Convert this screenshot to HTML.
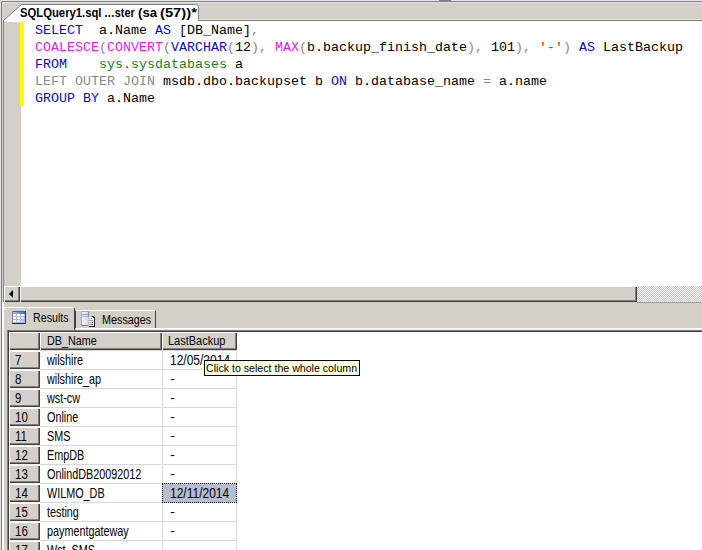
<!DOCTYPE html>
<html><head><meta charset="utf-8">
<style>
*{margin:0;padding:0;box-sizing:border-box}
html,body{width:702px;height:550px;overflow:hidden;background:#d4d0c8;position:relative;font-family:"Liberation Sans",sans-serif}
.a{position:absolute}
.t{white-space:pre;line-height:14px;color:#000;transform-origin:0 0}
.code{position:absolute;left:35px;top:22px;font-family:"Liberation Mono",monospace;font-size:13.33px;line-height:17px;white-space:pre;color:#000}
.k{color:#0c0cc0}.f{color:#e81ce8}.g{color:#8a8a8a}.s{color:#e01010}.n{color:#1a801a}
</style></head><body>
<div class="a" style="left:0px;top:0px;width:702px;height:1px;background:#e6e6e6;"></div>
<div class="a" style="left:0px;top:0px;width:1px;height:550px;background:#e0e0e0;"></div>
<div class="a" style="left:1px;top:1px;width:701px;height:1px;background:#808080;"></div>
<div class="a" style="left:439px;top:0px;width:12px;height:2px;background:#808080;"></div>
<div class="a" style="left:1px;top:1px;width:1px;height:549px;background:#808080;"></div>
<div class="a" style="left:2px;top:2px;width:700px;height:1px;background:#e4e2dc;"></div>
<div class="a" style="left:3px;top:20px;width:699px;height:1px;background:#808080;"></div>
<div class="a" style="left:3px;top:20px;width:1px;height:282px;background:#808080;"></div>
<div class="a" style="left:2px;top:21px;width:1px;height:281px;background:#d8d6d0;"></div>
<div class="a" style="left:4px;top:21px;width:698px;height:265px;background:#fff;"></div>
<div class="a" style="left:4px;top:21px;width:17px;height:265px;background:#d4d0c8;"></div>
<div class="a" style="left:20px;top:21px;width:4px;height:85px;background:#ffff00;"></div>
<div class="a" style="left:199px;top:19px;width:503px;height:1px;background:#e4e2dc;"></div>
<svg class="a" style="left:0;top:0" width="702" height="22">
  <path d="M3.5 21 L3.5 20.5 L21.5 4.5 L195.5 4.5 Q198.5 4.5 198.5 7.5 L198.5 20.5" fill="#fff" stroke="#808080" stroke-width="1"/>
  <rect x="4" y="20" width="194" height="2" fill="#fff"/>
</svg>
<div class="a t" style="left:20px;top:6px;font-size:12px;transform-origin:0 12px;transform:scale(0.94,1.0);font-weight:bold">SQLQuery1.sql</div>
<div class="a t" style="left:103.5px;top:6px;font-size:12px;transform-origin:0 12px;transform:scale(0.9,1.0);font-weight:bold">…ster</div>
<div class="a t" style="left:138px;top:6px;font-size:12px;transform-origin:0 12px;transform:scale(1.1,1.0);font-weight:bold">(sa</div>
<div class="a t" style="left:159.5px;top:6px;font-size:12px;transform-origin:0 12px;transform:scale(1.23,1.0);font-weight:bold">(57))*</div>
<div class="code"><span class="k">SELECT</span>  a.Name <span class="k">AS</span> [DB_Name]<span class="g">,</span>
<span class="f">COALESCE</span><span class="g">(</span><span class="f">CONVERT</span><span class="g">(</span><span class="k">VARCHAR</span><span class="g">(</span>12<span class="g">),</span> <span class="f">MAX</span><span class="g">(</span>b.backup_finish_date<span class="g">),</span> 101<span class="g">),</span> <span class="s">'-'</span><span class="g">)</span> <span class="k">AS</span> LastBackup
<span class="k">FROM</span>    <span class="n">sys.sysdatabases</span> a
<span class="g">LEFT OUTER JOIN</span> msdb.dbo.backupset b <span class="k">ON</span> b.database_name <span class="g">=</span> a.name
<span class="k">GROUP BY</span> a.Name</div>
<div class="a" style="left:4px;top:286px;width:698px;height:15px;background:#d4d0c8;"></div>
<div class="a" style="left:4px;top:301px;width:633px;height:1px;background:#404040;"></div>
<div class="a" style="left:4px;top:286px;width:16px;height:16px;background:#d4d0c8;box-shadow:inset 1px 1px 0 #fff,inset -1px -1px 0 #404040,inset -2px -2px 0 #808080"></div>
<svg class="a" style="left:9px;top:290px" width="5" height="8"><path d="M4 0 L4 8 L0 4 Z" fill="#000"/></svg>
<div class="a" style="left:20px;top:286px;width:617px;height:16px;background:#d4d0c8;box-shadow:inset 1px 1px 0 #fff,inset -1px -1px 0 #404040,inset -2px -2px 0 #808080"></div>
<svg class="a" style="left:637px;top:286px" width="65" height="16" shape-rendering="crispEdges"><defs><pattern id="ck" width="2" height="2" patternUnits="userSpaceOnUse"><rect width="2" height="2" fill="#fff"/><rect width="1" height="1" fill="#c4c2bc"/><rect x="1" y="1" width="1" height="1" fill="#c4c2bc"/></pattern></defs><rect width="65" height="16" fill="url(#ck)"/></svg>
<div class="a" style="left:637px;top:302px;width:65px;height:1px;background:#9a9a9a;"></div>
<div class="a" style="left:2px;top:302px;width:2px;height:248px;background:#fafafa;"></div>
<div class="a" style="left:3px;top:307px;width:72px;height:24px;background:#d4d0c8;border-top:1px solid #fff;border-left:1px solid #fff;border-right:1px solid #404040;border-radius:3px 2px 0 0"></div>
<svg class="a" style="left:12px;top:311px" width="14" height="13" shape-rendering="crispEdges">
  <defs><linearGradient id="hg" x1="0" x2="1"><stop offset="0" stop-color="#a0c0f4"/><stop offset="1" stop-color="#3a62d8"/></linearGradient></defs>
  <rect x="0" y="0" width="14" height="13" fill="#b4bcd8"/>
  <rect x="0" y="0" width="14" height="1" fill="#3c5cc8"/>
  <rect x="0" y="0" width="1" height="13" fill="#7080b8"/>
  <rect x="13" y="0" width="1" height="13" fill="#283070"/>
  <rect x="0" y="12" width="14" height="1" fill="#202838"/>
  <rect x="1" y="1" width="12" height="2" fill="url(#hg)"/>
  <rect x="1" y="3" width="3" height="2" fill="#fff"/><rect x="5" y="3" width="3" height="2" fill="#fff"/><rect x="9" y="3" width="3" height="2" fill="#f4f6ff"/>
  <rect x="1" y="6" width="3" height="2" fill="#fff"/><rect x="5" y="6" width="3" height="2" fill="#f8f8ff"/><rect x="9" y="6" width="3" height="2" fill="#dde2f6"/>
  <rect x="1" y="9" width="3" height="2" fill="#fff"/><rect x="5" y="9" width="3" height="2" fill="#e4e8f8"/><rect x="9" y="9" width="3" height="2" fill="#c4cbec"/>
</svg>
<div class="a t" style="left:32.5px;top:311px;font-size:12px;transform-origin:0 12px;transform:scale(0.89,1.0);">Results</div>
<div class="a" style="left:75px;top:310px;width:81px;height:18px;background:#d4d0c8;border-top:1px solid #fff;border-left:1px solid #404040;border-right:1px solid #404040"></div>
<svg class="a" style="left:81px;top:311px" width="16" height="16" shape-rendering="crispEdges">
  <defs><linearGradient id="dg" x1="0" x2="1"><stop offset="0" stop-color="#f8fbff"/><stop offset="1" stop-color="#c8d8e8"/></linearGradient></defs>
  <rect x="0" y="0" width="8" height="15" fill="url(#dg)"/>
  <rect x="0" y="0" width="1" height="15" fill="#a8a0c4"/>
  <rect x="7" y="0" width="1" height="15" fill="#8090a8"/>
  <rect x="0" y="0" width="8" height="1" fill="#a0a8c0"/>
  <rect x="0" y="14" width="8" height="1" fill="#707890"/>
  <rect x="1" y="3" width="6" height="1" fill="#98a4c0"/>
  <rect x="1" y="5" width="6" height="1" fill="#a8b4c8"/>
  <rect x="7" y="6" width="7" height="10" fill="#fff"/>
  <rect x="13" y="7" width="1" height="9" fill="#202030"/>
  <rect x="7" y="15" width="7" height="1" fill="#202030"/>
  <rect x="7" y="6" width="1" height="10" fill="#c0c0d0"/>
  <rect x="11" y="5" width="2" height="1" fill="#303040"/><rect x="12" y="6" width="2" height="1" fill="#303040"/>
  <rect x="8" y="7" width="3" height="1" fill="#eca898"/><rect x="8" y="9" width="3" height="1" fill="#e49888"/>
  <rect x="8" y="11" width="3" height="1" fill="#eca880"/><rect x="8" y="13" width="3" height="1" fill="#dc9080"/>
  <rect x="11" y="9" width="1" height="1" fill="#606070"/><rect x="11" y="11" width="1" height="1" fill="#404050"/><rect x="11" y="13" width="1" height="1" fill="#303040"/>
</svg>
<div class="a t" style="left:101.5px;top:313px;font-size:12px;transform-origin:0 12px;transform:scale(0.9,1.0);">Messages</div>
<div class="a" style="left:76px;top:328px;width:626px;height:1px;background:#fff;"></div>
<div class="a" style="left:76px;top:329px;width:626px;height:1px;background:#ecebe8;"></div>
<div class="a" style="left:7px;top:330px;width:695px;height:220px;background:#fff;"></div>
<div class="a" style="left:7px;top:330px;width:695px;height:2px;background:linear-gradient(#808080 0 1px,#404040 1px 2px);"></div>
<div class="a" style="left:7px;top:330px;width:2px;height:220px;background:linear-gradient(90deg,#808080 0 1px,#404040 1px 2px);"></div>
<div class="a" style="left:9px;top:332px;width:31px;height:18px;background:#d4d0c8;box-shadow:inset 1px 1px 0 #fff,inset -1px -1px 0 #404040,inset -2px -2px 0 #808080"></div>
<div class="a" style="left:40px;top:332px;width:122px;height:18px;background:#d4d0c8;box-shadow:inset 1px 1px 0 #fff,inset -1px -1px 0 #404040,inset -2px -2px 0 #808080"></div>
<div class="a" style="left:162px;top:332px;width:75px;height:18px;background:#d4d0c8;box-shadow:inset 1px 1px 0 #fff,inset -1px -1px 0 #404040,inset -2px -2px 0 #808080"></div>
<div class="a t" style="left:46.5px;top:334px;font-size:12px;transform-origin:0 12px;transform:scale(0.9,1.08);">DB_Name</div>
<div class="a t" style="left:167.5px;top:334px;font-size:12px;transform-origin:0 12px;transform:scale(0.915,1.08);">LastBackup</div>
<div class="a" style="left:9px;top:350px;width:31px;height:1px;background:#f4f4f4;"></div>
<div class="a" style="left:9px;top:351px;width:31px;height:18px;background:#d4d0c8;box-shadow:inset 1px 1px 0 #fff,inset -1px -1px 0 #404040,inset -2px -2px 0 #808080"></div>
<div class="a" style="left:40px;top:350px;width:197px;height:1px;background:#d8d8d8;"></div>
<div class="a t" style="left:15px;top:354px;font-size:12px;transform-origin:0 12px;transform:scale(0.96,1.18);">7</div>
<div class="a t" style="left:46.5px;top:354px;font-size:12px;transform-origin:0 12px;transform:scale(0.9,1.18);">wilshire</div>
<div class="a t" style="left:170px;top:354px;font-size:12px;transform-origin:0 12px;transform:scale(1.0,1.18);">12/05/2014</div>
<div class="a" style="left:9px;top:369px;width:31px;height:1px;background:#f4f4f4;"></div>
<div class="a" style="left:9px;top:370px;width:31px;height:18px;background:#d4d0c8;box-shadow:inset 1px 1px 0 #fff,inset -1px -1px 0 #404040,inset -2px -2px 0 #808080"></div>
<div class="a" style="left:40px;top:369px;width:197px;height:1px;background:#d8d8d8;"></div>
<div class="a t" style="left:15px;top:373px;font-size:12px;transform-origin:0 12px;transform:scale(0.96,1.18);">8</div>
<div class="a t" style="left:46.5px;top:373px;font-size:12px;transform-origin:0 12px;transform:scale(0.9,1.18);">wilshire_ap</div>
<div class="a t" style="left:169.5px;top:372px;font-size:12px;transform-origin:0 12px;transform:scale(1.25,1.0);">-</div>
<div class="a" style="left:9px;top:388px;width:31px;height:1px;background:#f4f4f4;"></div>
<div class="a" style="left:9px;top:389px;width:31px;height:18px;background:#d4d0c8;box-shadow:inset 1px 1px 0 #fff,inset -1px -1px 0 #404040,inset -2px -2px 0 #808080"></div>
<div class="a" style="left:40px;top:388px;width:197px;height:1px;background:#d8d8d8;"></div>
<div class="a t" style="left:15px;top:392px;font-size:12px;transform-origin:0 12px;transform:scale(0.96,1.18);">9</div>
<div class="a t" style="left:46.5px;top:392px;font-size:12px;transform-origin:0 12px;transform:scale(0.9,1.18);">wst-cw</div>
<div class="a t" style="left:169.5px;top:391px;font-size:12px;transform-origin:0 12px;transform:scale(1.25,1.0);">-</div>
<div class="a" style="left:9px;top:407px;width:31px;height:1px;background:#f4f4f4;"></div>
<div class="a" style="left:9px;top:408px;width:31px;height:18px;background:#d4d0c8;box-shadow:inset 1px 1px 0 #fff,inset -1px -1px 0 #404040,inset -2px -2px 0 #808080"></div>
<div class="a" style="left:40px;top:407px;width:197px;height:1px;background:#d8d8d8;"></div>
<div class="a t" style="left:15px;top:411px;font-size:12px;transform-origin:0 12px;transform:scale(0.96,1.18);">10</div>
<div class="a t" style="left:46.5px;top:411px;font-size:12px;transform-origin:0 12px;transform:scale(0.9,1.18);">Online</div>
<div class="a t" style="left:169.5px;top:410px;font-size:12px;transform-origin:0 12px;transform:scale(1.25,1.0);">-</div>
<div class="a" style="left:9px;top:426px;width:31px;height:1px;background:#f4f4f4;"></div>
<div class="a" style="left:9px;top:427px;width:31px;height:18px;background:#d4d0c8;box-shadow:inset 1px 1px 0 #fff,inset -1px -1px 0 #404040,inset -2px -2px 0 #808080"></div>
<div class="a" style="left:40px;top:426px;width:197px;height:1px;background:#d8d8d8;"></div>
<div class="a t" style="left:15px;top:430px;font-size:12px;transform-origin:0 12px;transform:scale(0.96,1.18);">11</div>
<div class="a t" style="left:46.5px;top:430px;font-size:12px;transform-origin:0 12px;transform:scale(0.9,1.18);">SMS</div>
<div class="a t" style="left:169.5px;top:429px;font-size:12px;transform-origin:0 12px;transform:scale(1.25,1.0);">-</div>
<div class="a" style="left:9px;top:445px;width:31px;height:1px;background:#f4f4f4;"></div>
<div class="a" style="left:9px;top:446px;width:31px;height:18px;background:#d4d0c8;box-shadow:inset 1px 1px 0 #fff,inset -1px -1px 0 #404040,inset -2px -2px 0 #808080"></div>
<div class="a" style="left:40px;top:445px;width:197px;height:1px;background:#d8d8d8;"></div>
<div class="a t" style="left:15px;top:449px;font-size:12px;transform-origin:0 12px;transform:scale(0.96,1.18);">12</div>
<div class="a t" style="left:46.5px;top:449px;font-size:12px;transform-origin:0 12px;transform:scale(0.9,1.18);">EmpDB</div>
<div class="a t" style="left:169.5px;top:448px;font-size:12px;transform-origin:0 12px;transform:scale(1.25,1.0);">-</div>
<div class="a" style="left:9px;top:464px;width:31px;height:1px;background:#f4f4f4;"></div>
<div class="a" style="left:9px;top:465px;width:31px;height:18px;background:#d4d0c8;box-shadow:inset 1px 1px 0 #fff,inset -1px -1px 0 #404040,inset -2px -2px 0 #808080"></div>
<div class="a" style="left:40px;top:464px;width:197px;height:1px;background:#d8d8d8;"></div>
<div class="a t" style="left:15px;top:468px;font-size:12px;transform-origin:0 12px;transform:scale(0.96,1.18);">13</div>
<div class="a t" style="left:46.5px;top:468px;font-size:12px;transform-origin:0 12px;transform:scale(0.9,1.18);">OnlindDB20092012</div>
<div class="a t" style="left:169.5px;top:467px;font-size:12px;transform-origin:0 12px;transform:scale(1.25,1.0);">-</div>
<div class="a" style="left:9px;top:483px;width:31px;height:1px;background:#f4f4f4;"></div>
<div class="a" style="left:9px;top:484px;width:31px;height:18px;background:#d4d0c8;box-shadow:inset 1px 1px 0 #fff,inset -1px -1px 0 #404040,inset -2px -2px 0 #808080"></div>
<div class="a" style="left:40px;top:483px;width:197px;height:1px;background:#d8d8d8;"></div>
<div class="a t" style="left:15px;top:487px;font-size:12px;transform-origin:0 12px;transform:scale(0.96,1.18);">14</div>
<div class="a t" style="left:46.5px;top:487px;font-size:12px;transform-origin:0 12px;transform:scale(0.9,1.18);">WILMO_DB</div>
<div class="a" style="left:162px;top:483px;width:75px;height:20px;background:#b6bdd2;border:1px dotted #000"></div>
<div class="a t" style="left:170px;top:487px;font-size:12px;transform-origin:0 12px;transform:scale(1.0,1.18);">12/11/2014</div>
<div class="a" style="left:9px;top:502px;width:31px;height:1px;background:#f4f4f4;"></div>
<div class="a" style="left:9px;top:503px;width:31px;height:18px;background:#d4d0c8;box-shadow:inset 1px 1px 0 #fff,inset -1px -1px 0 #404040,inset -2px -2px 0 #808080"></div>
<div class="a" style="left:40px;top:502px;width:197px;height:1px;background:#d8d8d8;"></div>
<div class="a t" style="left:15px;top:506px;font-size:12px;transform-origin:0 12px;transform:scale(0.96,1.18);">15</div>
<div class="a t" style="left:46.5px;top:506px;font-size:12px;transform-origin:0 12px;transform:scale(0.9,1.18);">testing</div>
<div class="a t" style="left:169.5px;top:505px;font-size:12px;transform-origin:0 12px;transform:scale(1.25,1.0);">-</div>
<div class="a" style="left:9px;top:521px;width:31px;height:1px;background:#f4f4f4;"></div>
<div class="a" style="left:9px;top:522px;width:31px;height:18px;background:#d4d0c8;box-shadow:inset 1px 1px 0 #fff,inset -1px -1px 0 #404040,inset -2px -2px 0 #808080"></div>
<div class="a" style="left:40px;top:521px;width:197px;height:1px;background:#d8d8d8;"></div>
<div class="a t" style="left:15px;top:525px;font-size:12px;transform-origin:0 12px;transform:scale(0.96,1.18);">16</div>
<div class="a t" style="left:46.5px;top:525px;font-size:12px;transform-origin:0 12px;transform:scale(0.9,1.18);">paymentgateway</div>
<div class="a t" style="left:169.5px;top:524px;font-size:12px;transform-origin:0 12px;transform:scale(1.25,1.0);">-</div>
<div class="a" style="left:9px;top:540px;width:31px;height:1px;background:#f4f4f4;"></div>
<div class="a" style="left:9px;top:541px;width:31px;height:18px;background:#d4d0c8;box-shadow:inset 1px 1px 0 #fff,inset -1px -1px 0 #404040,inset -2px -2px 0 #808080"></div>
<div class="a" style="left:40px;top:540px;width:197px;height:1px;background:#d8d8d8;"></div>
<div class="a t" style="left:15px;top:544px;font-size:12px;transform-origin:0 12px;transform:scale(0.96,1.18);">17</div>
<div class="a t" style="left:46.5px;top:544px;font-size:12px;transform-origin:0 12px;transform:scale(0.9,1.18);">Wst_SMS</div>
<div class="a t" style="left:169.5px;top:543px;font-size:12px;transform-origin:0 12px;transform:scale(1.25,1.0);">-</div>
<div class="a" style="left:162px;top:350px;width:1px;height:200px;background:#d8d8d8;"></div>
<div class="a" style="left:236px;top:350px;width:1px;height:200px;background:#d8d8d8;"></div>
<div class="a" style="left:162px;top:483px;width:75px;height:20px;background:#b6bdd2;border:1px dotted #000"></div>
<div class="a t" style="left:170px;top:487px;font-size:12px;transform-origin:0 12px;transform:scale(1.0,1.18);">12/11/2014</div>
<div class="a" style="left:204px;top:360px;width:156px;height:16px;background:#ffffe1;border:1px solid #000"></div>
<div class="a t" style="left:206px;top:361px;font-size:11px;transform-origin:0 12px;transform:scale(0.965,1.0);">Click to select the whole column</div>
</body></html>
